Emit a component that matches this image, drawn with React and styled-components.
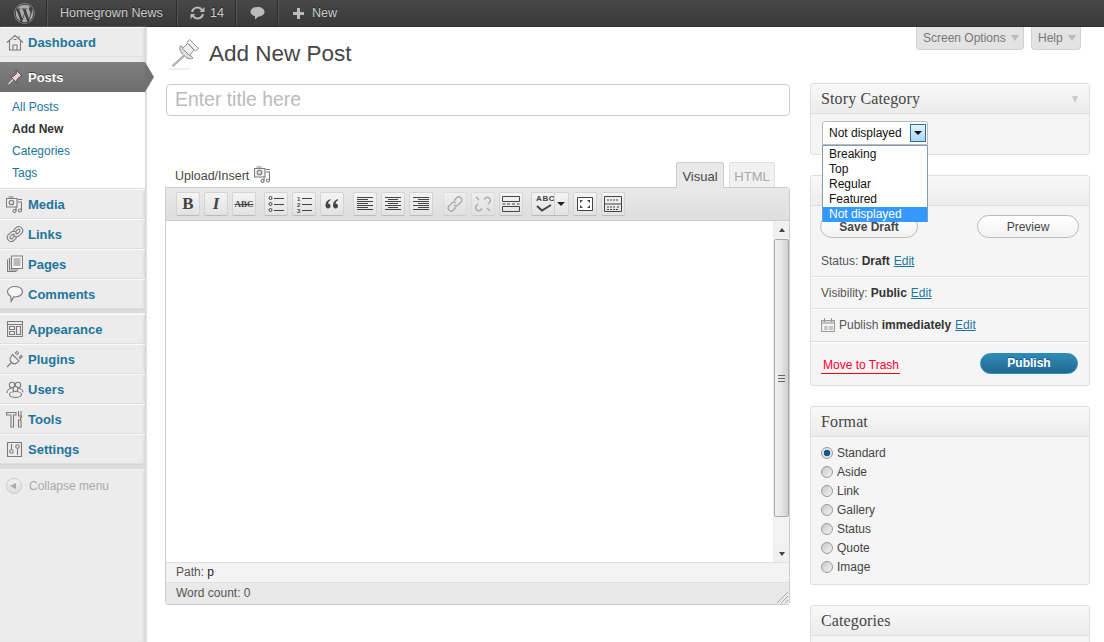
import React from 'react'
import styled, { createGlobalStyle } from 'styled-components'
import { FaWordpress } from 'react-icons/fa'

const GlobalStyle = createGlobalStyle`
html, body {
  margin: 0;
  padding: 0;
  height: 100%;
  overflow: hidden;
  background: #fff;
  font-family: "Liberation Sans", Arial, sans-serif;
  font-size: 12px;
  color: #333;
}
`

const Page = styled.div`
  width: 1104px;
  height: 642px;
  overflow: hidden;
  display: flex;
  flex-direction: column;
`

/* top bar */
const AdminBar = styled.div`
  height: 27px;
  flex: none;
  display: flex;
  background: linear-gradient(#474747, #3a3a3a);
  border-bottom: 1px solid #2f2f2f;
  box-sizing: border-box;
`
const BarItem = styled.div`
  display: flex;
  align-items: center;
  gap: ${p => p.$gap || 0}px;
  width: ${p => p.$w}px;
  padding-left: ${p => p.$pad || 0}px;
  box-sizing: border-box;
  border-right: 1px solid ${p => (p.$last ? 'transparent' : '#2c2c2c')};
  box-shadow: ${p => (p.$last ? 'none' : '1px 0 0 #555')};
  color: #ccc;
  font-size: 12.6px;
  text-shadow: 0 -1px 0 #222;
  margin-right: 1px;
`

const Body = styled.div`
  flex: 1;
  display: flex;
  min-height: 0;
`

/* left menu */
const Sidebar = styled.div`
  width: 145px;
  flex: none;
  background: #ececec;
  border-right: 1px solid #d9d9d9;
  box-shadow: inset -3px 0 3px -2px #d4d4d4, 1px 0 1px #e4e4e4;
  box-sizing: content-box;
  margin-right: 20px;
`
const MenuRow = styled.div`
  height: 30px;
  box-sizing: border-box;
  display: flex;
  align-items: center;
  font-weight: bold;
  font-size: 13px;
  color: #21759b;
  border-top: 1px solid #f9f9f9;
  border-bottom: 1px solid #dfdfdf;
  position: relative;
`
const ActiveRow = styled(MenuRow)`
  color: #fff;
  border: 0;
  background: linear-gradient(#808080, #6d6d6d);
  text-shadow: 0 -1px 0 #444;
  margin-top: 5px;
  &::after {
    content: '';
    position: absolute;
    left: 145px;
    top: 0;
    border-left: 9px solid #727272;
    border-top: 15px solid transparent;
    border-bottom: 15px solid transparent;
  }
`
const MenuIcon = styled.span`
  width: 29px;
  margin-right: -1px;
  flex: none;
  display: flex;
  justify-content: center;
  align-items: center;
`
const MenuSep = styled.div`
  height: ${p => p.$h || 5}px;
  box-sizing: border-box;
  background: #dcdcdc;
  border-top: 1px solid #d6d6d6;
  border-bottom: 1px solid #f4f4f4;
`
const SubMenu = styled.div`
  background: #fff;
  height: 97px;
  padding: 4px 0 0 12px;
  box-sizing: border-box;
  border-bottom: 1px solid #dfdfdf;
`
const SubLink = styled.div`
  height: 22px;
  line-height: 22px;
  color: ${p => (p.$current ? '#333' : '#21759b')};
  font-weight: ${p => (p.$current ? 'bold' : 'normal')};
`
const Collapse = styled.div`
  display: flex;
  align-items: center;
  height: 32px;
  padding-left: 6px;
  gap: 7px;
  color: #aaa;
`
const CollapseDot = styled.span`
  width: 16px;
  height: 16px;
  border-radius: 50%;
  border: 1px solid #ccc;
  background: linear-gradient(#f2f2f2, #dcdcdc);
  display: flex;
  align-items: center;
  justify-content: center;
  box-sizing: border-box;
  &::before {
    content: '';
    border-right: 6px solid #aaa;
    border-top: 3.5px solid transparent;
    border-bottom: 3.5px solid transparent;
    margin-left: -2px;
  }
`

/* main column */
const MainCol = styled.div`
  width: 624px;
  flex: none;
`
const Heading = styled.div`
  display: flex;
  align-items: center;
  height: 57px;
  padding: 0 0 3px 2px;
  box-sizing: border-box;
  gap: 9px;
  h1 {
    margin: 0;
    font-size: 22.5px;
    font-weight: normal;
    color: #464646;
    line-height: 54px;
  }
`
const TitleInput = styled.div`
  height: 32px;
  box-sizing: border-box;
  border: 1px solid #ccc;
  border-radius: 4px;
  padding-left: 8px;
  line-height: 29px;
  font-size: 19.4px;
  color: #bbb;
`
const EditorHead = styled.div`
  margin-top: 46px;
  height: 25px;
  display: flex;
  align-items: flex-end;
  padding-left: 9px;
`
const UploadLabel = styled.div`
  flex: 1;
  display: flex;
  align-items: center;
  gap: 5px;
  height: 25px;
  color: #464646;
  font-size: 12.5px;
  span { margin-top: 2px; }
`
const Tab = styled.div`
  height: ${p => (p.$active ? 26 : 25)}px;
  margin-bottom: ${p => (p.$active ? -1 : 0)}px;
  width: ${p => p.$w}px;
  margin-right: ${p => p.$mr}px;
  box-sizing: border-box;
  border: 1px solid ${p => (p.$active ? '#ccc' : '#dfdfdf')};
  border-bottom: 0;
  border-radius: 3px 3px 0 0;
  background: ${p => (p.$active ? '#e9e9e9' : '#f1f1f1')};
  color: ${p => (p.$active ? '#464646' : '#aaa')};
  text-align: center;
  font-size: 13px;
  line-height: 27px;
  position: relative;
`
const EditorBox = styled.div`
  border: 1px solid #ccc;
  border-radius: 0 3px 3px 3px;
  height: 418px;
  box-sizing: border-box;
  margin-left: -1px;
  display: flex;
  flex-direction: column;
`
const Toolbar = styled.div`
  height: 33px;
  flex: none;
  box-sizing: border-box;
  background: linear-gradient(#e9e9e9, #dedede);
  border-bottom: 1px solid #ccc;
  display: flex;
  align-items: flex-start;
  padding: 4px 0 0 10px;
`
const ToolBtn = styled.div`
  width: ${p => p.$w || 24}px;
  height: 24px;
  box-sizing: border-box;
  margin-right: ${p => p.$mr ?? 4}px;
  border: 1px solid #d4d4d4;
  border-bottom-color: #bbb;
  border-radius: 2px;
  background: linear-gradient(#f4f4f4, #e2e2e2);
  display: flex;
  align-items: center;
  justify-content: center;
  opacity: ${p => (p.$dim ? 0.55 : 1)};
  flex: none;
`
const BoldGlyph = styled.span`
  font-family: "Liberation Serif", serif;
  font-size: 17px;
  font-weight: bold;
  font-style: ${p => (p.$italic ? 'italic' : 'normal')};
  color: #444;
`
const AbcGlyph = styled.span`
  font-family: "Liberation Serif", serif;
  font-size: 9px;
  font-weight: bold;
  color: #444;
  text-decoration: line-through;
`
const SpellBtn = styled(ToolBtn)`
  position: relative;
  flex-direction: column;
  justify-content: flex-start;
  align-items: flex-start;
  padding-left: 4px;
`
const SpellText = styled.span`
  font-size: 8px;
  font-weight: bold;
  letter-spacing: 0.6px;
  line-height: 10px;
  color: #444;
  margin-top: 1px;
`
const SpellArrow = styled.span`
  width: 13px;
  height: 22px;
  border-left: 1px solid #d0d0d0;
  position: absolute;
  right: 0;
  top: 0;
  &::after {
    content: '';
    position: absolute;
    left: 2px;
    top: 9px;
    border-top: 4px solid #222;
    border-left: 4px solid transparent;
    border-right: 4px solid transparent;
  }
`
const EditArea = styled.div`
  height: 341px;
  flex: none;
  background: #fff;
  display: flex;
  justify-content: flex-end;
  min-height: 0;
`
const ScrollBar = styled.div`
  width: 16px;
  background: #f3f3f3;
  border-left: 1px solid #ececec;
  display: flex;
  flex-direction: column;
  align-items: center;
  box-sizing: border-box;
`
const ScrollEnd = styled.div`
  height: 17px;
  width: 100%;
  flex: none;
  margin-top: ${p => (p.$up ? 0 : 'auto')};
  display: flex;
  align-items: center;
  justify-content: center;
  background: #f0f0f0;
  &::before {
    content: '';
    border-left: 3.5px solid transparent;
    border-right: 3.5px solid transparent;
    ${p => (p.$up ? 'border-bottom: 4px solid #444;' : 'border-top: 4px solid #444;')}
  }
`
const ScrollThumb = styled.div`
  width: 15px;
  height: 278px;
  margin-top: 1px;
  box-sizing: border-box;
  flex: none;
  border: 1px solid #a9a9a9;
  border-radius: 2px;
  background: linear-gradient(90deg, #f2f2f2, #e6e6e6 50%, #cfcfcf);
  display: flex;
  align-items: center;
  justify-content: center;
  &::before {
    content: '';
    width: 7px;
    height: 5px;
    border-top: 1px solid #666;
    border-bottom: 1px solid #666;
    background: linear-gradient(#0000 40%, #666 40%, #666 60%, #0000 60%);
  }
`
const PathBar = styled.div`
  height: 21px;
  flex: none;
  box-sizing: border-box;
  background: #f3f3f3;
  border-top: 1px solid #dfdfdf;
  border-bottom: 1px solid #dfdfdf;
  padding-left: 10px;
  line-height: 19px;
  color: #555;
  b { font-weight: normal; color: #222; }
`
const WordBar = styled.div`
  flex: 1;
  background: #e9e9e9;
  padding-left: 10px;
  line-height: 20px;
  color: #555;
  position: relative;
  border-radius: 0 0 3px 3px;
`
const Grip = styled.svg`
  position: absolute;
  right: 1px;
  bottom: 1px;
`

/* right column */
const SideCol = styled.div`
  width: 280px;
  margin-left: 20px;
  flex: none;
`
const ScreenMeta = styled.div`
  display: flex;
  justify-content: flex-end;
  gap: 7px;
  padding-right: 9px;
  height: 56px;
  align-items: flex-start;
`
const MetaTab = styled.div`
  width: ${p => p.$w}px;
  height: 23px;
  box-sizing: border-box;
  background: #e3e3e3;
  border: 1px solid #d1d1d1;
  border-top: 0;
  border-radius: 0 0 4px 4px;
  color: #777;
  display: flex;
  align-items: center;
  padding-left: 6px;
  position: relative;
  padding-bottom: 1px;
  &::after {
    content: '';
    position: absolute;
    right: 4px;
    top: 8px;
    border-top: 6px solid #bbb;
    border-left: 4px solid transparent;
    border-right: 4px solid transparent;
  }
`
const Postbox = styled.div`
  border: 1px solid #dfdfdf;
  border-radius: 3px;
  background: #f5f5f5;
  height: ${p => p.$h}px;
  box-sizing: border-box;
  margin-bottom: 20px;
  position: relative;
`
const BoxHead = styled.div`
  height: 30px;
  box-sizing: border-box;
  background: linear-gradient(#f9f9f9, #ececec);
  border-bottom: 1px solid #dfdfdf;
  border-radius: 3px 3px 0 0;
  padding-left: 10px;
  font-family: "Liberation Serif", serif;
  font-size: 16px;
  letter-spacing: 0.12px;
  line-height: 29px;
  color: #464646;
  position: relative;
  ${p => p.$arrow && `
    &::after {
      content: '';
      position: absolute;
      right: 11px;
      top: 12px;
      border-top: 7px solid #ccc;
      border-left: 3.5px solid transparent;
      border-right: 3.5px solid transparent;
    }
  `}
`
const SelectWrap = styled.div`
  position: absolute;
  left: 11px;
  top: 37px;
  width: 106px;
  z-index: 5;
`
const SelectBox = styled.div`
  height: 24px;
  box-sizing: border-box;
  background: #fff;
  border: 1px solid #bbb;
  border-radius: 3px 3px 0 0;
  padding-left: 6px;
  line-height: 22px;
  color: #111;
  position: relative;
`
const SelectArrow = styled.span`
  position: absolute;
  right: 1px;
  top: 2px;
  width: 16px;
  height: 18px;
  box-sizing: border-box;
  border: 1px solid #2f6f9f;
  background: linear-gradient(#e4f3fc, #a9d8f4);
  &::after {
    content: '';
    position: absolute;
    left: 3px;
    top: 6px;
    border-top: 4px solid #111;
    border-left: 4px solid transparent;
    border-right: 4px solid transparent;
  }
`
const OptionList = styled.div`
  background: #fff;
  border: 1px solid #7f9db9;
  box-sizing: border-box;
  height: 77px;
  padding-top: 1px;
`
const Option = styled.div`
  height: 15px;
  line-height: 15px;
  padding-left: 6px;
  background: ${p => (p.$on ? '#3399ff' : 'transparent')};
  color: ${p => (p.$on ? '#fff' : '#111')};
`
const ActionRow = styled.div`
  display: flex;
  justify-content: space-between;
  padding: 9px 10px 0 9px;
  height: 38px;
  box-sizing: border-box;
`
const PillButton = styled.div`
  width: ${p => p.$w}px;
  height: 23px;
  box-sizing: border-box;
  border: 1px solid #bbb;
  border-radius: 12px;
  background: linear-gradient(#fff, #f2f2f2);
  color: #464646;
  text-align: center;
  line-height: 23px;
  font-weight: ${p => (p.$bold ? 'bold' : 'normal')};
`
const InfoRow = styled.div`
  height: ${p => p.$h}px;
  box-sizing: border-box;
  padding: ${p => p.$shift || 0}px 0 0 10px;
  display: flex;
  align-items: center;
  gap: 4px;
  border-bottom: 1px solid #dfdfdf;
  box-shadow: 0 1px 0 #fff;
  color: #555;
  white-space: pre;
  b { color: #333; }
`
const EditLink = styled.span`
  color: #21759b;
  text-decoration: underline;
`
const MajorRow = styled.div`
  display: flex;
  justify-content: space-between;
  padding: 11px 11px 0 10px;
`
const TrashLink = styled.span`
  color: #ff0033;
  height: 19px;
  line-height: 22px;
  margin-top: 1px;
  padding: 0 1px 0 2px;
  border-bottom: 1px solid #f00;
`
const PublishBtn = styled.div`
  width: 98px;
  height: 21px;
  box-sizing: border-box;
  border: 1px solid #298cba;
  border-radius: 11px;
  background: linear-gradient(#2e8bb8, #22698f);
  color: #fff;
  font-weight: bold;
  text-align: center;
  line-height: 19px;
  text-shadow: 0 -1px 0 #1a5a7c;
`
const RadioList = styled.div`
  padding: 6px 0 0 10px;
`
const RadioRow = styled.div`
  height: 19px;
  display: flex;
  align-items: center;
  gap: 4px;
  color: #444;
`
const RadioDot = styled.span`
  width: 12px;
  height: 12px;
  border-radius: 50%;
  box-sizing: border-box;
  border: 1px solid #9a9a9a;
  background: ${p => (p.$on
    ? 'radial-gradient(circle, #0a5a94 0 3px, #e6e6e6 3.6px)'
    : 'linear-gradient(135deg, #c8c8c8, #f4f4f4)')};
`

const stroke = { fill: 'none', stroke: '#7c7c7c', strokeWidth: 1.1 }

const HomeIcon = () => (
  <svg width="18" height="17" viewBox="0 0 18 17" {...stroke}>
    <path d="M1 8.500 9 1.500l8 7M3.500 7v9h11V7M7 16v-5h4v5M13 2v3" />
    <path d="M7.500 5.500h3" />
  </svg>
)
const MiniPin = ({ color = '#ddd' }) => (
  <svg width="16" height="16" viewBox="0 0 16 16">
    <path d="M9 1l6 6-2 .5-3 3-.5 3L4 8l2.500-.6 3-3z" fill={color} stroke="#4a3a3a" strokeWidth=".8" />
    <path d="M6 10.500 1.500 15" stroke={color} strokeWidth="1.200" />
  </svg>
)
const MediaIcon = () => (
  <svg width="17" height="17" viewBox="0 0 17 17" {...stroke}>
    <path d="M.5 2.500h10.500v8.500H.500zM2.500 1h5" fill="#f2f2f2" />
    <circle cx="5.500" cy="6.500" r="2.300" fill="#ddd" />
    <path d="M12 3.500h4M12 6h4M15.500 6v8M10 10.500v4.500" />
    <circle cx="8.500" cy="15" r="1.500" />
    <circle cx="14" cy="14.500" r="1.500" />
  </svg>
)
const LinkIcon = () => (
  <svg width="18" height="18" viewBox="0 0 18 18" fill="none">
    <g stroke="#777" strokeWidth="3.600" strokeLinecap="round">
      <path d="M9 5.500 11 3.500a2.700 2.700 0 0 1 3.800 3.800L12.500 9.500a2.700 2.700 0 0 1-3.500.3" />
      <path d="M9 12.500 7 14.500a2.700 2.700 0 0 1-3.800-3.800L5.500 8.500a2.700 2.700 0 0 1 3.500-.3" />
    </g>
    <g stroke="#eee" strokeWidth="1.600" strokeLinecap="round">
      <path d="M9 5.500 11 3.500a2.700 2.700 0 0 1 3.800 3.800L12.500 9.500a2.700 2.700 0 0 1-3.500.3" />
      <path d="M9 12.500 7 14.500a2.700 2.700 0 0 1-3.800-3.800L5.500 8.500a2.700 2.700 0 0 1 3.500-.3" />
    </g>
  </svg>
)
const PagesIcon = () => (
  <svg width="16" height="18" viewBox="0 0 16 18" {...stroke}>
    <path d="M.5 4.500v12h9" />
    <path d="M2.500 3v12h9" />
    <path d="M4.500 1h11v12.500h-11z" fill="#f8f8f8" />
    <path d="M6.500 4h7M6.500 6h7M6.500 8h7M6.500 10h7" />
  </svg>
)
const CommentIcon = () => (
  <svg width="16" height="18" viewBox="0 0 16 18" {...stroke}>
    <path d="M8 1.500c4 0 7.500 2 7.500 5.200S12 12 8 12c-.6 0-1 0-1.500-.1L4.200 16.500l-.5-5.300C2 10.200.5 8.700.5 6.700.5 3.500 4 1.500 8 1.500z" fill="#f6f6f6" />
  </svg>
)
const AppearanceIcon = () => (
  <svg width="16" height="16" viewBox="0 0 16 16" {...stroke}>
    <path d="M.5.500h15v15H.500zM.5 3.500h15" />
    <path d="M2.500 5.500h5v3h-5zM2.500 10.500h5v3h-5zM9.500 5.500h4v8h-4z" />
  </svg>
)
const PluginIcon = () => (
  <svg width="18" height="18" viewBox="0 0 18 18" {...stroke}>
    <path d="M6.500 4.500 13 11l-2 1.800c-2 1.500-4 1.200-5.500-.3S3.500 9 5 7z" fill="#eee" />
    <path d="M9 3.500 11.500 1M10.500 5 13 2.500M13 7.500l3-2.500M13.500 9l3-2.500M5 13l-4 4" />
  </svg>
)
const UsersIcon = () => (
  <svg width="18" height="17" viewBox="0 0 18 17" {...stroke}>
    <circle cx="6" cy="4" r="2.700" />
    <circle cx="12" cy="4" r="2.700" />
    <path d="M1 12c0-2.500 2-4.500 4.500-4.500M17 11.500c0-2.300-2-4-4.500-4" />
    <circle cx="9.500" cy="8" r="2.500" fill="#ececec" />
    <ellipse cx="9.500" cy="13.500" rx="6" ry="3" fill="#ececec" />
  </svg>
)
const ToolsIcon = () => (
  <svg width="17" height="18" viewBox="0 0 17 18" {...stroke}>
    <path d="M.5 2.500h9.500v2.500H7.500v12h-2.500V5H.500z" />
    <path d="M12.500 1v5M15 1v5M12 6h3.500v1.500h-1V10M12.500 10h2.500v7h-2.500z" />
  </svg>
)
const SettingsIcon = () => (
  <svg width="17" height="17" viewBox="0 0 17 17" {...stroke}>
    <path d="M1.500 1.500h14v14h-14z" />
    <circle cx="5.500" cy="10.500" r="1.800" />
    <circle cx="11.500" cy="5.500" r="1.800" />
    <path d="M5.500 3v5.500M11.500 7.500V14" />
  </svg>
)
const BigPin = () => (
  <svg width="32" height="32" viewBox="0 0 32 32">
    <path d="M15 17.500 4 27.500l1.500 1 11-10z" fill="#bbb" stroke="#999" strokeWidth=".6" />
    <path d="M13 7.500c-2.500 3-.5 7 2.500 9.500 2.500 3 6.500 5 9.500 3z" fill="#dcdcdc" stroke="#8e8e8e" />
    <path d="M19.500 5.500 26 12l-4.500 5.500-7-7z" fill="#ededed" stroke="#8e8e8e" />
    <path d="M21.500 1.500 30.500 10.500 27.500 13 19 4.500z" fill="#f7f7f7" stroke="#8e8e8e" />
    <path d="M1 31h21" stroke="#dedede" />
  </svg>
)
const CalendarIcon = () => (
  <svg width="14" height="14" viewBox="0 0 14 14">
    <path d="M.5 2.500h13v11H.500z" fill="#f2f2f2" stroke="#999" />
    <path d="M.5 2.500h13V5H.500z" fill="#ddd" stroke="#999" />
    <path d="M3.500 0v4M10.500 0v4M4 8v4M6 8v4M9 8v4M11 8v4" stroke="#999" />
  </svg>
)
const SyncIcon = () => (
  <svg width="15" height="14" viewBox="0 0 15 14" fill="none" stroke="#bbb" strokeWidth="2">
    <path d="M2 6a5.500 5.500 0 0 1 10-2M13 8a5.500 5.500 0 0 1-10 2" />
    <path d="M14.500 1v5h-5zM.500 13V8h5z" fill="#bbb" stroke="none" />
  </svg>
)
const BubbleIcon = () => (
  <svg width="15" height="14" viewBox="0 0 15 14">
    <path d="M7.500 1C11.500 1 14.500 3 14.500 6c0 2.500-3 4.500-6 4.500L5 13.500v-3.300C2.500 9.500.5 8 .5 6c0-3 3-5 7-5z" fill="#bbb" />
  </svg>
)
const PlusIcon = () => (
  <svg width="11" height="11" viewBox="0 0 11 11">
    <path d="M4 0h3v4h4v3H7v4H4V7H0V4h4z" fill="#bbb" />
  </svg>
)

const ink = { fill: 'none', stroke: '#444', strokeWidth: 1 }
const Lines = ({ rows }) => (
  <svg width="16" height="14" viewBox="0 0 16 14" {...ink}>
    {rows.map(([a, b], i) => <path key={i} d={`M${a} ${i * 2 + .5}H${b}`} />)}
  </svg>
)
const ListIcon = ({ numbered }) => (
  <svg width="16" height="17" viewBox="0 0 16 17" {...ink}>
    {[2, 8, 14].map((y, i) => (
      <g key={y}>
        {numbered
          ? <text x="1" y={y + 2.500} fontSize="6" fontWeight="bold" fontFamily="Liberation Sans" fill="#444" stroke="none">{i + 1}</text>
          : <circle cx="2.500" cy={y} r="1.500" />}
        <path d={`M6 ${y + .5}h10`} />
      </g>
    ))}
  </svg>
)
const QuoteIcon = () => (
  <svg width="14" height="10" viewBox="0 0 14 10">
    <path d="M5.500 0C2.500 1 .5 3 .5 6c0 2 1 3.500 2.500 3.500S5.500 8.500 5.500 7 4.500 4.500 3 4.500C3.300 3 4.300 1.800 5.500 1.200zM13 0c-3 1-5 3-5 6 0 2 1 3.500 2.500 3.500S13 8.500 13 7s-1-2.500-2.500-2.500c.3-1.500 1.300-2.700 2.500-3.300z" fill="#444" />
  </svg>
)
const ChainIcon = ({ broken }) => (
  <svg width="18" height="18" viewBox="0 0 18 18" fill="none" stroke="#777" strokeWidth="1.300">
    {broken ? (
      <>
        <path d="M10 4.500 11.500 3a3 3 0 0 1 4.200 4.200L14 9" />
        <path d="M8 13.500 6.500 15a3 3 0 0 1-4.200-4.200L4 9" />
        <path d="M2 2l3 3M13 13l3 3" />
      </>
    ) : (
      <>
        <path d="M8 6l2.500-3a3 3 0 0 1 4.500 4l-3 3a3 3 0 0 1-4 0" />
        <path d="M10 12l-2.500 3a3 3 0 0 1-4.500-4l3-3a3 3 0 0 1 4 0" />
      </>
    )}
  </svg>
)
const MoreIcon = () => (
  <svg width="18" height="16" viewBox="0 0 18 16" {...ink}>
    <path d="M.5.500h17v5H.500zM.5 15.500v-5h17v5zM.5 8h3M5 8h3M10 8h3M15 8h2.500" />
  </svg>
)
const CheckMark = () => (
  <svg width="16" height="8" viewBox="0 0 16 8" fill="none" stroke="#444" strokeWidth="2">
    <path d="M1 2l5 4.500L15 1" />
  </svg>
)
const FullIcon = () => (
  <svg width="16" height="14" viewBox="0 0 16 14">
    <path d="M.5.500h15v13H.500z" fill="#fff" stroke="#444" />
    <path d="M3 3h3L3 6zM13 3h-3l3 3zM3 11h3L3 8zM13 11h-3l3-3z" fill="#444" />
  </svg>
)
const SinkIcon = () => (
  <svg width="18" height="16" viewBox="0 0 18 16" fill="none" stroke="#444">
    <path d="M.5.500h17v15H.500zM.5 8h17" />
    <path d="M3 4h12M3 11h8M13 11h2M3 13.500h12" strokeDasharray="2 1" />
  </svg>
)

const menuTop = [
  ['Media', MediaIcon],
  ['Links', LinkIcon],
  ['Pages', PagesIcon],
  ['Comments', CommentIcon],
]
const menuBottom = [
  ['Appearance', AppearanceIcon],
  ['Plugins', PluginIcon],
  ['Users', UsersIcon],
  ['Tools', ToolsIcon],
  ['Settings', SettingsIcon],
]
const formats = ['Standard', 'Aside', 'Link', 'Gallery', 'Status', 'Quote', 'Image']
const storyOptions = ['Breaking', 'Top', 'Regular', 'Featured', 'Not displayed']

const left = [[0, 16], [0, 11], [0, 16], [0, 11], [0, 16], [0, 11], [0, 16]]
const center = [[0, 16], [3, 13], [0, 16], [3, 13], [0, 16], [3, 13], [0, 16]]
const right = [[0, 16], [5, 16], [0, 16], [5, 16], [0, 16], [5, 16], [0, 16]]

const MenuItem = ({ label, Icon }) => (
  <MenuRow>
    <MenuIcon><Icon /></MenuIcon>
    {label}
  </MenuRow>
)

const App = () => {
  return (
    <Page>
      <GlobalStyle />
      <AdminBar>
        <BarItem $w={47} $pad={14}><FaWordpress size={21} color="#aaa" /></BarItem>
        <BarItem $w={129} $pad={12}>Homegrown News</BarItem>
        <BarItem $w={58} $pad={12} $gap={5}><SyncIcon />14</BarItem>
        <BarItem $w={41} $pad={13}><BubbleIcon /></BarItem>
        <BarItem $w={90} $pad={14} $gap={8} $last><PlusIcon />New</BarItem>
      </AdminBar>
      <Body>
        <Sidebar>
          <MenuItem label="Dashboard" Icon={HomeIcon} />
          <ActiveRow>
            <MenuIcon><MiniPin color="#e8d5d5" /></MenuIcon>
            Posts
          </ActiveRow>
          <SubMenu>
            <SubLink>All Posts</SubLink>
            <SubLink $current>Add New</SubLink>
            <SubLink>Categories</SubLink>
            <SubLink>Tags</SubLink>
          </SubMenu>
          {menuTop.map(([label, Icon]) => <MenuItem key={label} label={label} Icon={Icon} />)}
          <MenuSep />
          {menuBottom.map(([label, Icon]) => <MenuItem key={label} label={label} Icon={Icon} />)}
          <MenuSep $h={6} />
          <Collapse><CollapseDot />Collapse menu</Collapse>
        </Sidebar>

        <MainCol>
          <Heading>
            <BigPin />
            <h1>Add New Post</h1>
          </Heading>
          <TitleInput>Enter title here</TitleInput>
          <EditorHead>
            <UploadLabel><span>Upload/Insert</span><MediaIcon /></UploadLabel>
            <Tab $active $w={48} $mr={5}>Visual</Tab>
            <Tab $w={46} $mr={15}>HTML</Tab>
          </EditorHead>
          <EditorBox>
            <Toolbar>
              <ToolBtn><BoldGlyph>B</BoldGlyph></ToolBtn>
              <ToolBtn><BoldGlyph $italic>I</BoldGlyph></ToolBtn>
              <ToolBtn $mr={8}><AbcGlyph>ABC</AbcGlyph></ToolBtn>
              <ToolBtn><ListIcon /></ToolBtn>
              <ToolBtn><ListIcon numbered /></ToolBtn>
              <ToolBtn $mr={9}><QuoteIcon /></ToolBtn>
              <ToolBtn><Lines rows={left} /></ToolBtn>
              <ToolBtn><Lines rows={center} /></ToolBtn>
              <ToolBtn $mr={10}><Lines rows={right} /></ToolBtn>
              <ToolBtn $dim><ChainIcon /></ToolBtn>
              <ToolBtn $dim><ChainIcon broken /></ToolBtn>
              <ToolBtn $mr={8}><MoreIcon /></ToolBtn>
              <SpellBtn $w={38} $mr={4}>
                <SpellText>ABC</SpellText>
                <CheckMark />
                <SpellArrow />
              </SpellBtn>
              <ToolBtn><FullIcon /></ToolBtn>
              <ToolBtn><SinkIcon /></ToolBtn>
            </Toolbar>
            <EditArea>
              <ScrollBar>
                <ScrollEnd $up />
                <ScrollThumb />
                <ScrollEnd />
              </ScrollBar>
            </EditArea>
            <PathBar>Path: <b>p</b></PathBar>
            <WordBar>
              Word count: 0
              <Grip width="12" height="12" viewBox="0 0 12 12" stroke="#aaa">
                <path d="M12 1 1 12M12 5 5 12M12 9 9 12" />
              </Grip>
            </WordBar>
          </EditorBox>
        </MainCol>

        <SideCol>
          <ScreenMeta>
            <MetaTab $w={108}>Screen Options</MetaTab>
            <MetaTab $w={50}>Help</MetaTab>
          </ScreenMeta>
          <Postbox $h={72}>
            <BoxHead $arrow>Story Category</BoxHead>
            <SelectWrap>
              <SelectBox>Not displayed<SelectArrow /></SelectBox>
              <OptionList>
                {storyOptions.map(o => (
                  <Option key={o} $on={o === 'Not displayed'}>{o}</Option>
                ))}
              </OptionList>
            </SelectWrap>
          </Postbox>
          <Postbox $h={211}>
            <BoxHead>Publish</BoxHead>
            <ActionRow>
              <PillButton $w={98} $bold>Save Draft</PillButton>
              <PillButton $w={102}>Preview</PillButton>
            </ActionRow>
            <InfoRow $h={33} $shift={2}><span>Status: <b>Draft</b></span><EditLink>Edit</EditLink></InfoRow>
            <InfoRow $h={32}><span>Visibility: <b>Public</b></span><EditLink>Edit</EditLink></InfoRow>
            <InfoRow $h={33}><CalendarIcon /><span>Publish <b>immediately</b></span><EditLink>Edit</EditLink></InfoRow>
            <MajorRow>
              <TrashLink>Move to Trash</TrashLink>
              <PublishBtn>Publish</PublishBtn>
            </MajorRow>
          </Postbox>
          <Postbox $h={179}>
            <BoxHead>Format</BoxHead>
            <RadioList>
              {formats.map((f, i) => (
                <RadioRow key={f}><RadioDot $on={i === 0} />{f}</RadioRow>
              ))}
            </RadioList>
          </Postbox>
          <Postbox $h={80}>
            <BoxHead>Categories</BoxHead>
          </Postbox>
        </SideCol>
      </Body>
    </Page>
  )
}

export default App
